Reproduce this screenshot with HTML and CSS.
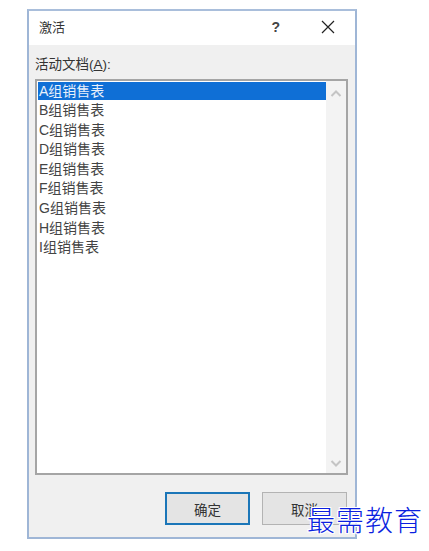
FILE: index.html
```html
<!DOCTYPE html>
<html>
<head>
    <title>激活</title>
    <link rel="stylesheet" href="styles.css">
</head>
<body>
    <div class="dialog">
        <div class="titlebar">
            <span class="title">激活</span>
            <span class="help">?</span>
            <svg class="close" width="14" height="14" viewBox="0 0 14 14">
                <path d="M1 1L13 13M13 1L1 13" stroke="#222" stroke-width="1.2" fill="none"/>
            </svg>
        </div>
        <div class="content">
            <div class="label">活动文档(<u>A</u>):</div>
            <div class="listbox">
                <ul class="items">
                    <li class="selected">A组销售表</li>
                    <li>B组销售表</li>
                    <li>C组销售表</li>
                    <li>D组销售表</li>
                    <li>E组销售表</li>
                    <li>F组销售表</li>
                    <li>G组销售表</li>
                    <li>H组销售表</li>
                    <li>I组销售表</li>
                </ul>
                <div class="scrollbar">
                    <svg width="12" height="7" viewBox="0 0 12 7">
                        <path d="M1.5 6L6 1.5L10.5 6" stroke="#c4c4c4" stroke-width="2" fill="none"/>
                    </svg>
                    <svg width="12" height="7" viewBox="0 0 12 7">
                        <path d="M1.5 1L6 5.5L10.5 1" stroke="#c4c4c4" stroke-width="2" fill="none"/>
                    </svg>
                </div>
            </div>
            <div class="buttons">
                <button class="btn primary">确定</button>
                <button class="btn">取消</button>
            </div>
        </div>
    </div>
    <div class="watermark">最需教育</div>
</body>
</html>
```

FILE: styles.css
```css
* {
    box-sizing: border-box;
    margin: 0;
}

body {
    position: relative;
    height: 551px;
    padding: 9px 0 0 27px;
    overflow: hidden;
    background: #fff;
    font-family: "Liberation Sans", "Noto Sans CJK SC", sans-serif;
    font-size: 13px;
    color: #333;
}

.dialog {
    width: 330px;
    height: 530px;
    border: 2px solid #9fb6d6;
    border-top-color: #a9bedb;
    background: #f0f0f0;
    display: flex;
    flex-direction: column;
}

.titlebar {
    height: 34px;
    background: #fff;
    display: flex;
    align-items: center;
    padding: 0 20px 3px 10px;
    flex-shrink: 0;
}

.title {
    font-size: 13px;
    flex: 1;
}

.help {
    font-size: 14px;
    font-weight: bold;
    margin-right: 41px;
    color: #444;
}

.content {
    flex: 1;
    padding: 11px 7px 11px 6px;
    display: flex;
    flex-direction: column;
}

.label {
    height: 23px;
    line-height: 18px;
    font-size: 13.5px;
}

.listbox {
    height: 396px;
    border: 2px solid #a5a5a5;
    background: #fff;
    display: flex;
    padding: 1px 0 0 1px;
}

.items {
    flex: 1;
    list-style: none;
    padding: 0;
}

.items li {
    height: 19.6px;
    line-height: 19px;
    padding-left: 1px;
    font-size: 14px;
    color: #444;
}

.items li.selected {
    height: 18px;
    line-height: 18px;
    margin-bottom: 1px;
    background: #0f6fd6;
    color: #e8f0fa;
}

.scrollbar {
    width: 20px;
    margin-top: -1px;
    background: #f3f3f3;
    display: flex;
    flex-direction: column;
    align-items: center;
    justify-content: space-between;
    padding: 9px 0 6px;
}

.buttons {
    display: flex;
    justify-content: flex-end;
    gap: 12px;
    margin-top: 17px;
    padding-right: 1px;
}

.btn {
    width: 85px;
    height: 33px;
    border: 1px solid #b3b3b3;
    background: #e4e4e4;
    font-family: inherit;
    font-size: 13.5px;
    color: #333;
}

.btn.primary {
    border: 2px solid #1b76b8;
}

.watermark {
    position: absolute;
    left: 307px;
    top: 502px;
    font-family: "Noto Sans CJK SC", sans-serif;
    font-size: 28px;
    font-weight: 300;
    line-height: 34px;
    letter-spacing: 1px;
    white-space: nowrap;
    color: #0b1fe0;
    text-shadow: 1px 0 #fff, -1px 0 #fff, 0 1px #fff, 0 -1px #fff, 1px 1px #fff, -1px -1px #fff, 1px -1px #fff, -1px 1px #fff;
}
```
